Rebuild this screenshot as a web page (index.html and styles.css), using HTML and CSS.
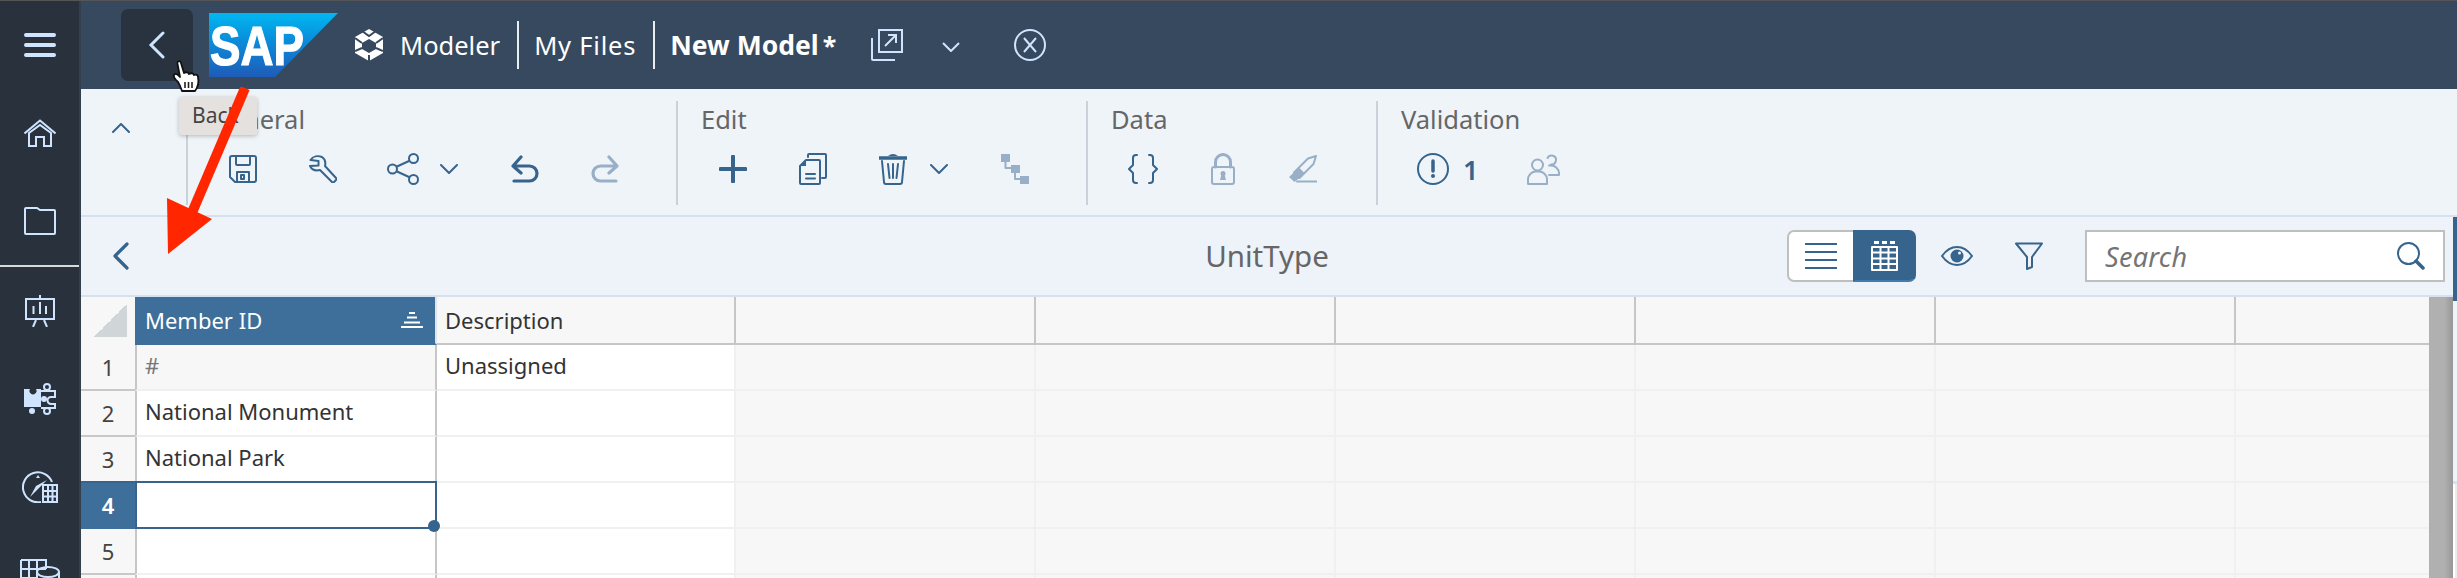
FILE: index.html
```html
<!DOCTYPE html>
<html lang="en">
<head>
    <meta charset="UTF-8">
    <meta name="viewport" content="width=device-width, initial-scale=1.0">
    <title>New Model - Modeler</title>
    <link rel="stylesheet" href="styles.css">
</head>
<body>
    <div class="topline"></div>
    <div class="app">
        <!-- Left navigation -->
        <nav class="sidebar">
            <div class="nav-item">
                <svg width="32" height="24" viewBox="0 0 32 24"><path class="nav-bars" d="M2 2H30M2 12H30M2 22H30"/></svg>
            </div>
            <div class="nav-item">
                <svg width="32" height="28" viewBox="0 0 32 28"><path d="M.5 14.500 16 1.500l15.500 13M5 14V27H12V18H20V27H27V14L16 6Z"/></svg>
            </div>
            <div class="nav-item">
                <svg width="32" height="28" viewBox="0 0 32 28"><path d="M1 2A1 1 0 0 1 2 1H13L16 3H30A1 1 0 0 1 31 4V26A1 1 0 0 1 30 27H2A1 1 0 0 1 1 26Z"/></svg>
            </div>
            <div class="nav-divider"></div>
            <div class="nav-item">
                <svg width="30" height="32" viewBox="0 0 30 32"><path d="M15 0V4M1 4H29V24H1ZM11 25 8 32M19 25 22 32M8.500 19V11M15 19V7M21 19V11"/></svg>
            </div>
            <div class="nav-item">
                <svg width="32" height="32" viewBox="0 0 32 32"><path class="nav-fill" d="M0 6H6A3.500 3.500 0 1 0 12 6H17V24H0Z"/><circle class="nav-fill" cx="8" cy="28" r="3"/><circle cx="23" cy="4" r="3"/><circle cx="23" cy="28" r="3"/><path d="M17 8H31V14H27A3 3 0 0 0 27 21H31V25H17"/><circle class="nav-fill" cx="20" cy="16" r="3"/></svg>
            </div>
            <div class="nav-item">
                <svg width="36" height="32" viewBox="0 0 36 32"><path d="M19 31A15 15 0 1 1 30 11"/><path class="nav-fill" d="M25 9 8 26 14 15Z"/><path class="nav-fill" d="M16 4l2 3h-4Z"/><path d="M21 14H35V31H21ZM26 14V31M30.500 14V31M21 20H35M21 25.500H35"/></svg>
            </div>
            <div class="nav-item">
                <svg width="40" height="32" viewBox="0 0 40 32"><path d="M1 1H26V10M1 1V32M1 10H26M1 19H16M9 1V32M17 1V19"/><ellipse cx="28" cy="13" rx="11" ry="5"/><path d="M17 13V32M39 13V32"/></svg>
            </div>
        </nav>

        <div class="main">
            <!-- Shell header -->
            <header class="shell">
                <button class="back-btn">
                    <svg width="18" height="28" viewBox="0 0 18 28"><path d="M15 2 3 14 15 26"/></svg>
                </button>
                <svg class="logo" width="129" height="64" viewBox="0 0 129 64">
                    <defs>
                        <linearGradient id="sap-blue" x1="0" y1="0" x2="0" y2="1">
                            <stop offset="0" stop-color="#00b8f1"/>
                            <stop offset="0.4" stop-color="#0a8fdc"/>
                            <stop offset="1" stop-color="#1e5cb8"/>
                        </linearGradient>
                    </defs>
                    <path d="M0 0H129L66 64H0Z" fill="url(#sap-blue)"/>
                    <text class="logo-text" x="1" y="52" textLength="94" lengthAdjust="spacingAndGlyphs">SAP</text>
                </svg>
                <svg class="app-icon" width="28" height="32" viewBox="0 0 28 32">
                    <path fill="#fff" fill-rule="evenodd" d="M14 0 28 8V24L14 32 0 24V8ZM14 10 7 14V20L14 24 21 20V14Z"/>
                    <path fill="none" stroke="#36495f" stroke-width="2" d="M7 2 14 7 21 2M0 9 7 14M28 9 21 14M0 22 7 19M28 22 21 19M14 26V32"/>
                </svg>
                <span class="crumb">Modeler</span>
                <span class="crumb crumb-files">My Files</span>
                <span class="crumb-current">New Model<span class="dirty">*</span></span>
                <svg class="ext-icon shell-icon" width="32" height="32" viewBox="0 0 32 32"><path d="M8 1H31V23H8ZM1 9V30A1 1 0 0 0 2 31H24M14 17 25 6M17 6H25V14"/></svg>
                <svg class="shell-chevron shell-icon" width="18" height="10" viewBox="0 0 18 10"><path d="M1 1 9 9 17 1"/></svg>
                <svg class="close-icon shell-icon" width="32" height="32" viewBox="0 0 32 32"><circle cx="16" cy="16" r="15"/><path d="M10 9 22 23M22 9 10 23"/></svg>
            </header>

            <!-- Ribbon -->
            <section class="ribbon">
                <div class="collapse">
                    <svg class="icon" width="18" height="10" viewBox="0 0 18 10"><path d="M1 9 9 1 17 9"/></svg>
                </div>
                <div class="group group-general">
                    <div class="group-label">General</div>
                    <div class="tools">
                        <svg class="icon" width="28" height="28" viewBox="0 0 28 28"><path d="M3 1H25A2 2 0 0 1 27 3V25A2 2 0 0 1 25 27H6L1 22V3A2 2 0 0 1 3 1ZM7 1V9A1 1 0 0 0 8 10H20A1 1 0 0 0 21 9V1M8 27V17H20V27M12 20H15V24H12Z"/></svg>
                        <svg class="icon" width="28" height="28" viewBox="0 0 28 28"><path d="M1.500 5C4 1 9 .5 13 2 16 4 17 7 16 11L27 23A1.500 1.500 0 0 1 27 25L25 27A1.500 1.500 0 0 1 23 27L11 15C7 16 3 15 1 11L9.500 10.500V6Z"/></svg>
                        <svg class="icon wide" width="32" height="32" viewBox="0 0 32 32"><circle cx="5.500" cy="16" r="4.500"/><circle cx="26.500" cy="5.500" r="4.500"/><circle cx="26.500" cy="26.500" r="4.500"/><path d="M10 13.500 22 8M10 18.500 22 24"/></svg>
                        <svg class="icon caret" width="18" height="10" viewBox="0 0 18 10"><path d="M1 1 9 9 17 1"/></svg>
                        <svg class="icon bold" width="28" height="28" viewBox="0 0 28 28"><path d="M10 2 2 11 10 18M2 11H18.500A7.500 7.500 0 0 1 18.500 26H3"/></svg>
                        <svg class="icon bold off" width="28" height="28" viewBox="0 0 28 28"><path d="M18 2 26 11 18 18M26 11H9.500A7.500 7.500 0 0 0 9.500 26H25"/></svg>
                    </div>
                </div>
                <div class="group group-edit">
                    <div class="group-label">Edit</div>
                    <div class="tools">
                        <svg class="icon plus" width="28" height="28" viewBox="0 0 28 28"><path d="M14 1.500V26.500M1.500 14H26.500"/></svg>
                        <svg class="icon" width="28" height="32" viewBox="0 0 28 32"><path d="M1 13 7 7H20A1 1 0 0 1 21 8V30A1 1 0 0 1 20 31H2A1 1 0 0 1 1 30ZM7 21H16M7 25.500H16M9 4V2A1 1 0 0 1 10 1H26A1 1 0 0 1 27 2V24A1 1 0 0 1 26 25H23"/><path class="solid" d="M1 13 7 7V13Z"/></svg>
                        <svg class="icon" width="28" height="32" viewBox="0 0 28 32"><path class="solid" d="M9 3Q14-1 19 3Z"/><path class="lid" d="M0 5H28"/><path d="M3 8 5 29A2 2 0 0 0 7 31H21A2 2 0 0 0 23 29L25 8M9 11 10.500 25M14 11V25M19 11 17.500 25"/></svg>
                        <svg class="icon caret" width="18" height="10" viewBox="0 0 18 10"><path d="M1 1 9 9 17 1"/></svg>
                        <svg class="icon off" width="28" height="30" viewBox="0 0 28 30"><path d="M4.500 8V14H10M14 19V25H19"/><path class="solid" d="M0 0H9V8H0ZM10 11H19V19H10ZM19 22H28V30H19Z"/></svg>
                    </div>
                </div>
                <div class="group group-data">
                    <div class="group-label">Data</div>
                    <div class="tools">
                        <svg class="icon" width="30" height="30" viewBox="0 0 30 30"><path d="M9 1H8A3 3 0 0 0 5 4V11L1 15 5 19V26A3 3 0 0 0 8 29H9M21 1H22A3 3 0 0 1 25 4V11L29 15 25 19V26A3 3 0 0 1 22 29H21"/></svg>
                        <svg class="icon off lock" width="24" height="32" viewBox="0 0 24 32"><path class="shackle" d="M4.500 14V9A7.500 7.500 0 0 1 19.500 9V14"/><rect x="1" y="14" width="22" height="17" rx="2"/><circle class="solid" cx="12" cy="20.500" r="2.500"/><path class="solid" d="M10.500 21.500 9 27H15L13.500 21.500Z"/></svg>
                        <svg class="icon off" width="28" height="28" viewBox="0 0 28 28"><path d="M27 1 19 3.500 5 17.500 10.500 23 24.500 9ZM8 26.500H28"/><path class="solid" d="M10 12.500 15.500 18 10.500 23 5.500 27 0 22 5 17.500Z"/></svg>
                    </div>
                </div>
                <div class="group group-validation">
                    <div class="group-label">Validation</div>
                    <div class="tools">
                        <svg class="icon wide" width="32" height="32" viewBox="0 0 32 32"><circle cx="16" cy="16" r="15"/><path class="lid" d="M16 8V18"/><circle class="solid" cx="16" cy="23" r="2"/></svg>
                        <span class="count">1</span>
                        <svg class="icon off users" width="33" height="32" viewBox="0 0 33 32"><circle cx="10.500" cy="12" r="5.500"/><path d="M1 31V26A8 8 0 0 1 9 18.500H12A8 8 0 0 1 20 26V31ZM24 11.500A4.500 4.500 0 1 0 20.500 5M22 12.500H24A8 8 0 0 1 32 20V22H22"/></svg>
                    </div>
                </div>
            </section>

            <div class="content">
                <div class="workspace">
                    <!-- Dimension toolbar -->
                    <div class="titlebar">
                        <div class="title-left">
                            <svg class="icon bold" width="18" height="28" viewBox="0 0 18 28"><path d="M15 2 3 14 15 26"/></svg>
                        </div>
                        <div class="title">UnitType</div>
                        <div class="title-right">
                            <div class="segment">
                                <div class="seg-part">
                                    <svg class="icon" width="32" height="26" viewBox="0 0 32 26"><path d="M0 1H32M0 9H32M0 17H32M0 25H32"/></svg>
                                </div>
                                <div class="seg-part seg-active">
                                    <svg class="icon grid-icon" width="27" height="30" viewBox="0 0 27 30"><path class="dash" d="M3 1.500H8M11 1.500H16M19 1.500H24"/><path d="M1 6H26V29H1ZM9.500 6V29M17.500 6V29M1 11.500H26M1 17.500H26M1 23H26"/></svg>
                                </div>
                            </div>
                            <svg class="icon eye" width="32" height="20" viewBox="0 0 32 20"><path d="M1 10C6 3 11 1 16 1S26 3 31 10C26 17 21 19 16 19S6 17 1 10Z"/><circle class="solid" cx="16" cy="10" r="6.500"/><circle class="glint" cx="18.500" cy="7" r="1.500"/></svg>
                            <svg class="icon funnel" width="28" height="28" viewBox="0 0 28 28"><path d="M1 1.500H27L17 15V25L12 27V15Z"/></svg>
                            <div class="search">
                                <span class="search-text">Search</span>
                                <svg class="icon" width="28" height="28" viewBox="0 0 28 28"><circle cx="11.500" cy="11.500" r="10.500"/><path class="lid" d="M19 19 26 26"/></svg>
                            </div>
                        </div>
                    </div>

                    <!-- Member sheet -->
                    <div class="sheet">
                        <div class="sheet-body">
                            <table class="grid">
                                <colgroup>
                                    <col class="col-num"><col class="col-id"><col class="col-desc">
                                    <col class="col-blank"><col class="col-blank"><col class="col-blank">
                                    <col class="col-blank"><col class="col-blank"><col class="col-blank">
                                </colgroup>
                                <thead>
                                    <tr>
                                        <th class="corner"><span class="corner-mark"></span></th>
                                        <th class="head-id">
                                            <div class="head-inner">
                                                Member ID
                                                <svg width="22" height="16" viewBox="0 0 22 16"><path d="M8 1H14M6 5.500H16M3 10.500H19M0 15H22"/></svg>
                                            </div>
                                        </th>
                                        <th>Description</th>
                                        <th></th><th></th><th></th><th></th><th></th><th></th>
                                    </tr>
                                </thead>
                                <tbody>
                                    <tr>
                                        <td class="num">1</td><td class="id id-locked">#</td><td class="desc">Unassigned</td>
                                        <td></td><td></td><td></td><td></td><td></td><td></td>
                                    </tr>
                                    <tr>
                                        <td class="num">2</td><td class="id">National Monument</td><td class="desc"></td>
                                        <td></td><td></td><td></td><td></td><td></td><td></td>
                                    </tr>
                                    <tr>
                                        <td class="num num-before">3</td><td class="id">National Park</td><td class="desc"></td>
                                        <td></td><td></td><td></td><td></td><td></td><td></td>
                                    </tr>
                                    <tr>
                                        <td class="num num-active">4</td>
                                        <td class="id id-active"><div class="selection"><span class="handle"></span></div></td>
                                        <td class="desc"></td>
                                        <td></td><td></td><td></td><td></td><td></td><td></td>
                                    </tr>
                                    <tr>
                                        <td class="num">5</td><td class="id"></td><td class="desc"></td>
                                        <td></td><td></td><td></td><td></td><td></td><td></td>
                                    </tr>
                                    <tr>
                                        <td class="num"></td><td class="id"></td><td class="desc"></td>
                                        <td></td><td></td><td></td><td></td><td></td><td></td>
                                    </tr>
                                </tbody>
                            </table>
                        </div>
                        <div class="scrollbar"></div>
                    </div>
                </div>
                <div class="edge">
                    <div class="edge-thumb"></div>
                    <div class="edge-track"></div>
                    <div class="edge-line"></div>
                    <div class="edge-rest"></div>
                </div>
            </div>
        </div>
    </div>

    <!-- Overlays: tooltip and the annotation on top of the screenshot -->
    <div class="tooltip">Back</div>
    <svg class="arrow" width="90" height="170" viewBox="0 0 90 170">
        <path d="M0 111 45 132 1 167Z" fill="#ff2600"/>
        <path d="M78 1 24 128" fill="none" stroke="#ff2600" stroke-width="10"/>
    </svg>
    <svg class="cursor" width="30" height="34" viewBox="0 0 30 34">
        <path d="M7 23C4 20 2 18 3 16 4 14 7 15 9 18L6.500 5C6 2 9 1 10 4L13 14C15 13 17 13 18 15 20 14 22 14 23 16 25 15 27 16 27 18 28 23 27 28 24 32H11C10 29 9 26 7 23Z" fill="#fff" stroke="#111" stroke-width="1.800" stroke-linejoin="round"/>
        <path d="M14 23V29M17.500 23V29M21 23V29" stroke="#222" stroke-width="1.600" fill="none"/>
    </svg>
</body>
</html>
```

FILE: styles.css
```css
* {
    box-sizing: border-box;
}
html, body {
    height: 100%;
}
body {
    margin: 0;
    overflow: hidden;
    font-family: "Noto Sans", Arial, sans-serif;
    color: #333;
    background-color: #fff;
}
.topline {
    height: 1px;
    background-color: #555;
}
.app {
    display: flex;
    height: 577px;
}

/* sidebar */
.sidebar {
    flex: 0 0 81px;
    background-color: #29313c;
    border-right: 2px solid #343f4e;
    overflow: hidden;
}
.nav-item {
    height: 88px;
    display: flex;
    align-items: center;
    justify-content: center;
}
.nav-item svg {
    flex: none;
    fill: none;
    stroke: #cfe5ff;
    stroke-width: 2;
}
.nav-item .nav-bars {
    stroke-width: 4;
    stroke-linecap: round;
}
.nav-item .nav-fill {
    fill: #cfe5ff;
    stroke: none;
}
.nav-divider {
    height: 2px;
    background-color: #d9d9d9;
}

.main {
    flex: 1;
    min-width: 0;
    display: flex;
    flex-direction: column;
}

/* shell header */
.shell {
    flex: 0 0 88px;
    display: flex;
    align-items: center;
    background-color: #36495f;
    color: #fff;
    font-size: 25.500px;
}
.back-btn {
    width: 72px;
    height: 72px;
    margin-left: 40px;
    padding: 0;
    display: flex;
    align-items: center;
    justify-content: center;
    border: none;
    border-radius: 7px;
    background-color: #29323f;
}
.back-btn svg {
    fill: none;
    stroke: #cfe5ff;
    stroke-width: 3;
    stroke-linecap: round;
}
.logo {
    margin-left: 16px;
}
.logo-text {
    font-family: "Liberation Sans", Arial, sans-serif;
    font-weight: 700;
    font-size: 56px;
    fill: #fff;
    stroke: #fff;
    stroke-width: 1.200px;
}
.app-icon {
    margin-left: 17px;
    margin-right: 17px;
}
.crumb {
    height: 48px;
    line-height: 48px;
    padding-right: 17px;
    margin-right: 15px;
    border-right: 2px solid #e8edf2;
}
.crumb-files {
    letter-spacing: 0.800px;
}
.crumb-current {
    font-size: 26.500px;
    font-weight: 700;
    white-space: nowrap;
}
.dirty {
    margin-left: 4px;
    font-size: 25px;
}
.shell-icon {
    fill: none;
    stroke: #cfe5ff;
    stroke-width: 2;
}
.ext-icon {
    margin-left: 35px;
}
.shell-chevron {
    margin-left: 39px;
    margin-top: 4px;
}
.close-icon {
    margin-left: 54px;
}

/* ribbon */
.ribbon {
    flex: 0 0 128px;
    display: flex;
    padding-top: 12px;
    background-color: #eff4f9;
    border-bottom: 2px solid #d5e1f0;
}
.collapse {
    width: 105px;
    padding: 15px 0 0 31px;
}
.group {
    height: 104px;
    padding-left: 23px;
    border-left: 2px solid #c9d1da;
}
.group-general {
    width: 490px;
}
.group-edit {
    width: 410px;
}
.group-data {
    width: 290px;
}
.group-label {
    height: 36px;
    line-height: 36px;
    font-size: 25.500px;
    color: #666;
}
.tools {
    display: flex;
    align-items: center;
    gap: 52px;
    height: 32px;
    margin: 16px 0 0 18px;
}
.icon {
    flex: none;
    fill: none;
    stroke: #36648c;
    stroke-width: 2;
    stroke-linecap: round;
    stroke-linejoin: round;
}
.icon .solid {
    fill: #36648c;
    stroke: none;
}
.icon .lid {
    stroke-width: 3.500;
}
.icon.bold {
    stroke-width: 3.200;
}
.icon.plus {
    stroke-width: 4;
}
.icon.wide {
    margin: 0 -2px;
}
.icon.caret {
    margin-left: -29px;
    margin-right: 1px;
}
.icon.off {
    stroke: #98afc7;
}
.icon.off .solid {
    fill: #98afc7;
}
.icon.lock .shackle {
    stroke-width: 3;
}
.group-data .icon:first-child {
    margin: 0 -1px;
}
.group-data .lock {
    margin: 0 2px;
}
.count {
    margin-left: -36px;
    font-size: 27px;
    font-weight: 600;
    color: #36648c;
}
.users {
    margin-left: -3px;
}

/* content under the ribbon */
.content {
    flex: 1;
    min-height: 0;
    display: flex;
}
.workspace {
    flex: 1;
    min-width: 0;
    display: flex;
    flex-direction: column;
}
.edge {
    flex: 0 0 4px;
    display: flex;
    flex-direction: column;
}
.edge-thumb {
    height: 84px;
    background-color: #36648c;
}
.edge-track {
    height: 180px;
    background-color: #eff4f9;
}
.edge-line {
    height: 3px;
    background-color: #d5e1f0;
}
.edge-rest {
    flex: 1;
    background: linear-gradient(to right, #fff 2px, #ececec 2px);
}

.titlebar {
    flex: 0 0 80px;
    display: grid;
    grid-template-columns: 1fr auto 1fr;
    align-items: center;
    padding: 0 8px;
    background-color: #edf3f8;
    border-bottom: 2px solid #d5e1f0;
}
.title-left {
    display: flex;
    padding-left: 23px;
}
.title {
    font-size: 29.500px;
    line-height: 36px;
    color: #666;
}
.title-right {
    display: flex;
    align-items: center;
    justify-content: flex-end;
}
.segment {
    display: flex;
    width: 129px;
    height: 52px;
}
.seg-part {
    width: 66px;
    display: flex;
    align-items: center;
    justify-content: center;
    background-color: #fff;
    border: 2px solid #bfbfbf;
    border-right: none;
    border-radius: 7px 0 0 7px;
}
.seg-active {
    width: 63px;
    background-color: #36648c;
    border: 2px solid #36648c;
    border-bottom-color: #427cac;
    border-radius: 0 7px 7px 0;
}
.grid-icon {
    stroke: #fff;
    stroke-linecap: butt;
}
.grid-icon .dash {
    stroke-width: 3;
}
.eye {
    margin-left: 25px;
}
.eye .glint {
    fill: #edf3f8;
    stroke: none;
}
.funnel {
    margin-left: 42px;
}
.search {
    width: 360px;
    height: 52px;
    margin-left: 42px;
    padding: 0 18px;
    display: flex;
    align-items: center;
    justify-content: space-between;
    background-color: #fff;
    border: 2px solid #bfbfbf;
}
.search-text {
    font-size: 27px;
    font-style: italic;
    letter-spacing: 0.300px;
    color: #747474;
}

/* sheet */
.sheet {
    flex: 1;
    min-height: 0;
    display: flex;
}
.sheet-body {
    flex: 1;
    min-width: 0;
    overflow: hidden;
}
.scrollbar {
    flex: 0 0 24px;
    background: linear-gradient(to right, #b0b0b0 65%, #979797);
}
.grid {
    width: 2455px;
    table-layout: fixed;
    border-collapse: separate;
    border-spacing: 0;
    font-size: 22px;
}
.col-num {
    width: 54px;
}
.col-id {
    width: 302px;
}
.col-desc {
    width: 299px;
}
.col-blank {
    width: 300px;
}
th {
    height: 48px;
    padding: 0 8px;
    font-weight: 400;
    text-align: left;
    color: #333;
    background-color: #f7f7f7;
    border-right: 2px solid #c6c6c6;
    border-bottom: 2px solid #c6c6c6;
}
.corner {
    padding: 0;
    border-right: none;
    border-bottom-color: #f7f7f7;
}
.corner-mark {
    display: block;
    width: 33px;
    height: 33px;
    margin: 0 0 0 13px;
    background: linear-gradient(to bottom right, transparent 50%, #d0d5d8 50%);
}
.head-id {
    padding: 0 12px 0 10px;
    color: #fff;
    background-color: #3d6f9a;
    border-right-color: #dfe5ea;
    border-bottom-color: #3d6f9a;
}
.head-inner {
    display: flex;
    align-items: center;
    justify-content: space-between;
}
.head-inner svg {
    fill: none;
    stroke: #fff;
    stroke-width: 2;
}
td {
    height: 46px;
    padding: 0 8px 4px;
    background-color: #f7f7f7;
    border-right: 2px solid #f0f0f0;
    border-bottom: 2px solid #f0f0f0;
    white-space: nowrap;
}
.num {
    padding: 0;
    text-align: center;
    color: #444;
    border-right: none;
    border-bottom-color: #c8c8c8;
}
.num-before {
    border-bottom-color: #36648c;
}
.num-active {
    color: #fff;
    font-weight: 600;
    background-color: #3d6f9a;
    border-bottom-color: #3d6f9a;
}
.id {
    background-color: #fff;
    border-left: 2px solid #c6c6c6;
    border-right-color: #c6c6c6;
}
.id-locked {
    color: #777;
    background-color: #f7f7f7;
}
.id-active {
    position: relative;
}
.desc {
    background-color: #fff;
}
.selection {
    position: absolute;
    top: -2px;
    left: -2px;
    right: -2px;
    bottom: -2px;
    border: 2px solid #36648c;
}
.handle {
    position: absolute;
    right: -5px;
    bottom: -5px;
    width: 12px;
    height: 12px;
    border-radius: 50%;
    background-color: #36648c;
}

/* overlays */
.tooltip {
    position: absolute;
    left: 179px;
    top: 97px;
    width: 78px;
    height: 38px;
    padding-left: 13px;
    line-height: 36px;
    font-size: 21px;
    color: #444;
    background-color: #e5e1df;
    border-radius: 3px;
    box-shadow: 0 1px 4px rgba(0, 0, 0, 0.25);
}
.arrow {
    position: absolute;
    left: 167px;
    top: 87px;
}
.cursor {
    position: absolute;
    left: 171px;
    top: 59px;
}
```
